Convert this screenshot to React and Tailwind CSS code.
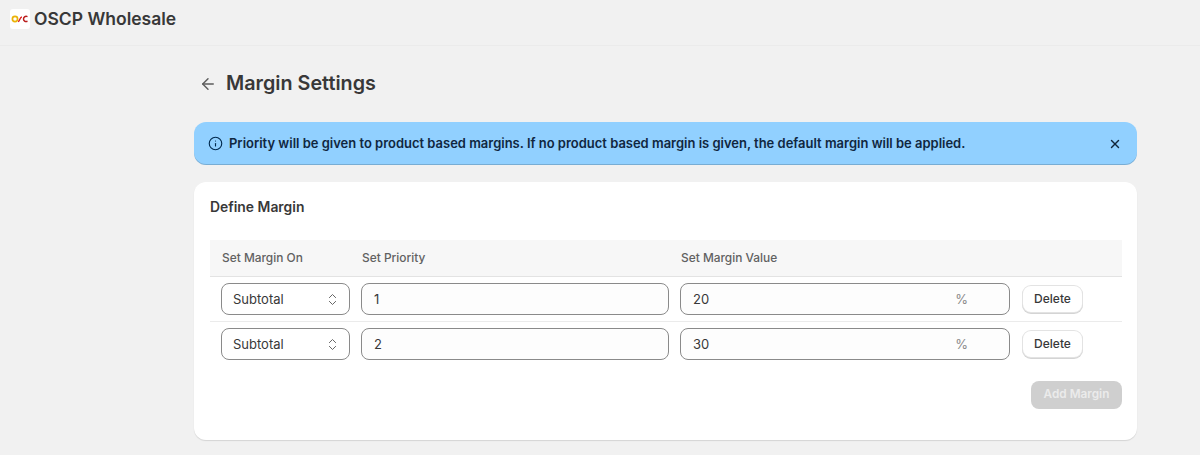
import React from "react";
import { ArrowLeft, ChevronsUpDown, Info, X } from "lucide-react";

const rows = [
  { id: 1, priority: "1", value: "20" },
  { id: 2, priority: "2", value: "30" },
];

function Logo() {
  return (
    <div className="flex h-5 w-5 items-center justify-center rounded-[3px] bg-white">
      <svg width="18" height="10" viewBox="0 0 18 10" fill="none">
        <circle cx="4" cy="5" r="2.6" stroke="#eab308" strokeWidth="1.7" />
        <path d="M7 7.5C9 7.5 8.5 3 11 3" stroke="#dc2626" strokeWidth="1.4" />
        <path d="M16.5 2.6C14 1.8 12.5 3.2 12.5 5C12.5 6.8 14 8 16.5 7.3" stroke="#b91c1c" strokeWidth="1.5" />
      </svg>
    </div>
  );
}

export default function App() {
  return (
    <div className="h-[455px] overflow-hidden bg-[#f1f1f1] font-['Inter',sans-serif] text-[#383838]">
      {/* top bar */}
      <header className="flex h-[46px] items-start gap-1 border-b border-[#ebebeb] pl-2.5 pt-[9px]">
        <Logo />
        <span className="text-[17.5px] leading-5 font-semibold">OSCP Wholesale</span>
      </header>

      <main className="ml-[194px] w-[943px]">
        <div className="flex h-[76px] items-center pb-[1px] pl-[5px]">
          <ArrowLeft size={18} strokeWidth={1.9} className="text-[#5c5c5c]" />
          <h1 className="ml-[9px] text-[19.75px] font-semibold">Margin Settings</h1>
        </div>

        {/* banner */}
        <div className="flex h-[43px] items-center rounded-xl bg-[#91d0ff] pr-[15px] pl-[14px] shadow-[inset_0_-1px_0_rgba(0,0,0,0.17)]">
          <Info size={15} strokeWidth={1.8} className="text-[#00294d]" />
          <p className="ml-[6px] flex-1 text-[12.97px] font-semibold text-[#10273f]">
            Priority will be given to product based margins. If no product based margin is given, the default margin will be applied.
          </p>
          <X size={14} strokeWidth={2.4} className="text-[#12263a]" />
        </div>

        {/* card */}
        <section className="mt-[17px] h-[258px] rounded-xl bg-white pr-[15px] pl-4 pt-4 shadow-[0_1px_1px_rgba(0,0,0,0.12)]">
          <h2 className="text-[13.9px] leading-[18px] font-semibold">Define Margin</h2>

          <div className="mt-[24px]">
            <div className="flex h-[37px] items-center gap-3 border-b border-[#e3e3e3] bg-[#f7f7f7] pb-[1px] pl-3 text-[11.9px] font-medium text-[#616161]">
              <div className="w-[128px]">Set Margin On</div>
              <div className="w-[307px]">Set Priority</div>
              <div>Set Margin Value</div>
            </div>

            {rows.map((row, i) => (
              <div
                key={row.id}
                className={`flex h-[45px] items-center pl-[11px] text-[13px] leading-5 ${i === 0 ? "border-b border-[#ebebeb]" : "pb-[1px]"}`}
              >
                <div className="flex h-8 w-[129px] items-center justify-between rounded-lg border border-[#8a8a8a] bg-white pr-[9px] pl-[11px]">
                  <span>Subtotal</span>
                  <ChevronsUpDown size={15} strokeWidth={1.5} className="text-[#5c5c5c]" />
                </div>
                <div className="ml-[11px] flex h-8 w-[308px] items-center rounded-lg border border-[#8a8a8a] bg-[#fdfdfd] pl-3">
                  {row.priority}
                </div>
                <div className="ml-[11px] flex h-8 w-[330px] items-center rounded-lg border border-[#8a8a8a] bg-[#fdfdfd] pr-[41px] pl-3">
                  <span className="flex-1">{row.value}</span>
                  <span className="text-[#8a8a8a]">%</span>
                </div>
                <button className="ml-[13px] h-[26px] w-[59px] rounded-lg bg-white text-xs font-medium shadow-[0_0_0_1px_#e3e3e3,0_1px_0_1px_#d4d4d4]">
                  Delete
                </button>
              </div>
            ))}

            <div className="mt-[14px] flex justify-end">
              <button className="h-7 w-[91px] rounded-lg bg-[#cfcfcf] text-[11.8px] font-semibold text-[#ebebeb]">
                Add Margin
              </button>
            </div>
          </div>
        </section>
      </main>
    </div>
  );
}
